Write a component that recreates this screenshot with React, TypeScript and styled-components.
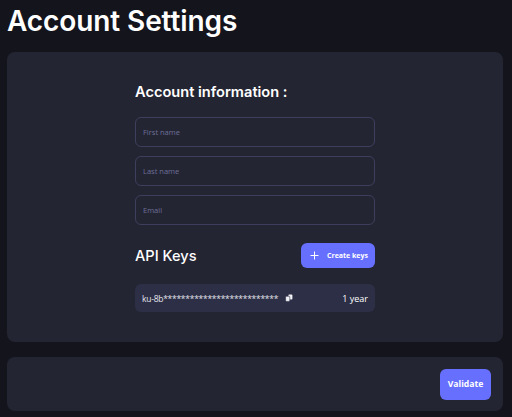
import { createGlobalStyle, styled } from "styled-components";

const GlobalStyle = createGlobalStyle`
  html, body {
    margin: 0;
    padding: 0;
    background: #14141d;
    font-family: "Open Sans", "Liberation Sans", sans-serif;
    overflow: hidden;
  }
`;

const Page = styled.div`
  width: 512px;
  height: 417px;
  padding: 0 9px 0 7px;
  box-sizing: border-box;
  color: #fff;
  overflow: hidden;
`;

const Title = styled.h1`
  margin: 0;
  height: 52px;
  font-family: "Inter", sans-serif;
  font-size: 28px;
  font-weight: 600;
  letter-spacing: -0.1px;
  line-height: 42px;
`;

const Panel = styled.section`
  height: 290px;
  background: #242533;
  border-radius: 8px;
  padding: 28px 128px 0;
  box-sizing: border-box;
`;

const SectionTitle = styled.h2`
  margin: 0 0 15px;
  height: 22px;
  font-family: "Inter", sans-serif;
  font-size: 14.6px;
  font-weight: 600;
  line-height: 24px;
`;

const Form = styled.form`
  display: flex;
  flex-direction: column;
  gap: 9px;
`;

const Field = styled.input`
  width: 240px;
  height: 30px;
  box-sizing: border-box;
  padding: 0 7px;
  background: transparent;
  border: 1px solid #3d3f5c;
  border-radius: 6px;
  color: #fff;
  font-family: "Open Sans", sans-serif;
  font-size: 7.5px;
  outline: none;

  &::placeholder {
    color: #6d6f98;
    opacity: 1;
  }
`;

const KeysHeader = styled.div`
  display: flex;
  align-items: center;
  justify-content: space-between;
  margin-top: 18px;
  height: 25px;
`;

const KeysTitle = styled.h2`
  margin: 0;
  font-family: "Inter", sans-serif;
  font-size: 14.6px;
  font-weight: 500;
`;

const Button = styled.button`
  display: flex;
  align-items: center;
  justify-content: center;
  border: none;
  border-radius: 6px;
  background: #676ffe;
  color: #fff;
  font-family: "Open Sans", sans-serif;
  font-weight: 700;
  padding: 0;
`;

const CreateButton = styled(Button)`
  width: 74px;
  height: 25px;
  gap: 8px;
  padding-left: 2px;
  font-size: 7px;
`;

const ValidateButton = styled(Button)`
  width: 51px;
  height: 31px;
  font-size: 8.6px;
`;

const KeyRow = styled.div`
  display: flex;
  align-items: center;
  width: 240px;
  height: 28px;
  margin-top: 16px;
  padding: 0 7px;
  box-sizing: border-box;
  background: #2d2f46;
  border-radius: 6px;
  font-size: 8.5px;
`;

const KeyValue = styled.span`
  color: #e4e4ec;
  letter-spacing: -0.26px;
  white-space: nowrap;
`;

const CopyIcon = styled.svg`
  width: 8px;
  height: 8px;
  margin-left: 7px;
`;

const Duration = styled.span`
  margin-left: auto;
  font-size: 9px;
`;

const Footer = styled.section`
  display: flex;
  align-items: center;
  justify-content: flex-end;
  height: 54px;
  margin-top: 15px;
  padding-right: 12px;
  background: #242533;
  border-radius: 8px;
`;

export default function App() {
  return (
    <Page>
      <GlobalStyle />
      <Title>Account Settings</Title>
      <Panel>
        <SectionTitle>Account information :</SectionTitle>
        <Form>
          <Field placeholder="First name" />
          <Field placeholder="Last name" />
          <Field placeholder="Email" />
        </Form>
        <KeysHeader>
          <KeysTitle>API Keys</KeysTitle>
          <CreateButton type="button">
            <svg width="9" height="9" viewBox="0 0 9 9" fill="none" stroke="#fff" strokeWidth="1">
              <path d="M4.5 0.5v8M0.5 4.5h8" />
            </svg>
            Create keys
          </CreateButton>
        </KeysHeader>
        <KeyRow>
          <KeyValue>ku-8b**************************</KeyValue>
          <CopyIcon viewBox="0 0 8 8" fill="#f2f2f6">
            <rect x="3.4" y="0.6" width="4" height="5" rx="0.8" />
            <rect x="0.6" y="2.2" width="4.2" height="5.2" rx="0.8" stroke="#2d2f46" strokeWidth="0.6" />
          </CopyIcon>
          <Duration>1 year</Duration>
        </KeyRow>
      </Panel>
      <Footer>
        <ValidateButton type="button">Validate</ValidateButton>
      </Footer>
    </Page>
  );
}
